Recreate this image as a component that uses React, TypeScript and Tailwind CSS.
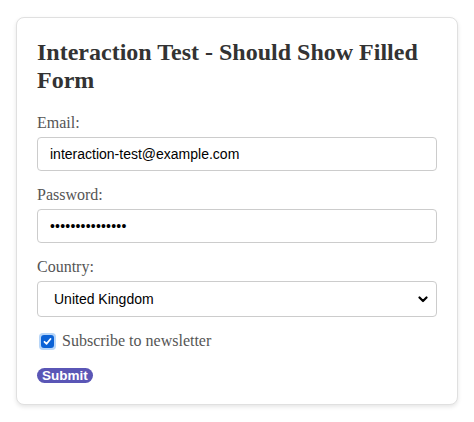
import React from "react";

export default function App() {
  return (
    <div className="bg-white w-[474px] h-[422px] pt-[17px] px-[16px]" style={{ fontFamily: '"Liberation Serif", serif' }}>
      <div className="border border-[#e0e0e0] rounded-[8px] shadow-[0_2px_4px_rgba(0,0,0,0.1)] bg-white px-[20px] pt-[20px] pb-[21px]">
        <h2 className="text-[24px] leading-[28px] font-bold text-[#333] mb-[20px]">
          Interaction Test - Should Show Filled Form
        </h2>
        <div className="mb-[15px]">
          <label className="block text-[16px] leading-[18px] text-[#555] mb-[5px]">Email:</label>
          <div
            className="h-[34px] border border-[#ccc] rounded-[4px] px-[12px] flex items-center text-[14px] text-black"
            style={{ fontFamily: '"Liberation Sans", Arial, sans-serif' }}
          >
            interaction-test@example.com
          </div>
        </div>
        <div className="mb-[15px]">
          <label className="block text-[16px] leading-[18px] text-[#555] mb-[5px]">Password:</label>
          <div
            className="h-[34px] border border-[#ccc] rounded-[4px] px-[12px] flex items-center text-[14px] text-black tracking-[0.2px]"
            style={{ fontFamily: '"Liberation Sans", Arial, sans-serif' }}
          >
            •••••••••••••••
          </div>
        </div>
        <div className="mb-[15px]">
          <label className="block text-[16px] leading-[18px] text-[#555] mb-[5px]">Country:</label>
          <div
            className="h-[36px] border border-[#ccc] rounded-[4px] pl-[16px] pr-[8px] flex items-center justify-between text-[14px] text-black"
            style={{ fontFamily: '"Liberation Sans", Arial, sans-serif' }}
          >
            <span>United Kingdom</span>
            <svg width="10" height="7" viewBox="0 0 10 7">
              <path d="M1.5 1.5 L5 5 L8.5 1.5" stroke="#000" strokeWidth="2.2" fill="none" strokeLinecap="round" strokeLinejoin="round" />
            </svg>
          </div>
        </div>
        <div className="flex items-center gap-[6px] mb-[18px] pl-[2px]">
          <span className="w-[17px] h-[17px] rounded-[4px] bg-[#b8d6f8] flex items-center justify-center">
            <span className="w-[13px] h-[13px] rounded-[3px] bg-[#0b62d6] flex items-center justify-center">
              <svg width="9" height="9" viewBox="0 0 9 9">
                <path d="M1.5 4.8 L3.6 6.8 L7.5 2" stroke="#fff" strokeWidth="1.8" fill="none" strokeLinecap="round" strokeLinejoin="round" />
              </svg>
            </span>
          </span>
          <span className="text-[16px] leading-[18px] text-[#555]">Subscribe to newsletter</span>
        </div>
        <div className="flex">
          <button
            className="bg-[#5a56b6] text-white font-bold text-[13.5px] leading-[14px] rounded-full px-[5px] h-[15px]"
            style={{ fontFamily: '"Liberation Sans", Arial, sans-serif' }}
          >
            Submit
          </button>
        </div>
      </div>
    </div>
  );
}
